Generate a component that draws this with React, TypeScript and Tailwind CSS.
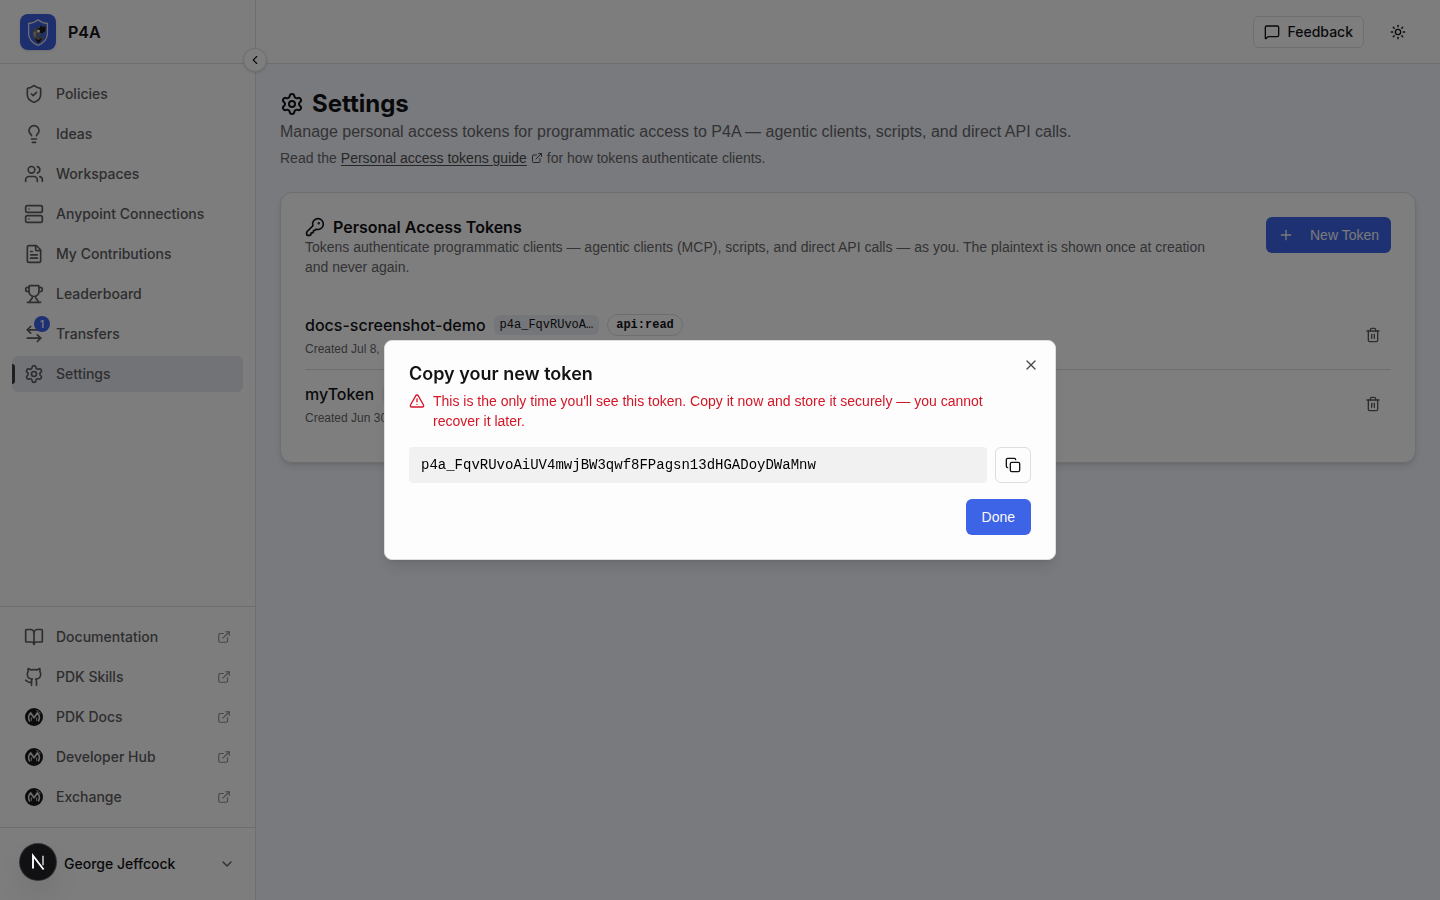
import React from "react";
import {
  ArrowLeftRight,
  BookOpen,
  ChevronDown,
  ChevronLeft,
  Copy,
  ExternalLink,
  FileText,
  Github,
  KeyRound,
  Lightbulb,
  MessageSquare,
  Plus,
  Server,
  Settings,
  ShieldCheck,
  Sun,
  Trash2,
  TriangleAlert,
  Trophy,
  Users,
  X,
} from "lucide-react";

type IconType = React.ComponentType<{ className?: string }>;

function MuleIcon({ className }: { className?: string }) {
  return (
    <svg viewBox="0 0 20 20" className={className} fill="none" aria-hidden="true">
      <circle cx="10" cy="10" r="9" fill="#18181b" />
      <path
        d="M5.800 14.600C3.900 11.600 4.400 8 6.700 6L10 10.800 13.300 6c2.300 2 2.800 5.600.9 8.600"
        stroke="#d8d8d8"
        strokeWidth="1.800"
        strokeLinejoin="round"
      />
      <path d="M7.300 13.800V10.500M12.700 13.800V10.500" stroke="#d8d8d8" strokeWidth="1" />
      <path d="M12.400 3.600c1.700.5 3.100 1.600 3.900 3.200" stroke="#d8d8d8" strokeWidth="0.900" />
    </svg>
  );
}

function Logo() {
  return (
    <svg viewBox="0 0 36 36" className="size-9 shrink-0 rounded-lg shadow-sm" aria-hidden="true">
      <rect width="36" height="36" fill="#3d5ee0" />
      <path
        d="M18 5.800c2.800 2.400 6 3.500 9.400 3.700v10.200c0 5.400-4 9.200-9.400 11.700-5.400-2.500-9.400-6.300-9.400-11.700V9.500c3.400-.2 6.600-1.300 9.400-3.700z"
        fill="#3d5ee0"
        stroke="#dcdcdc"
        strokeWidth="1.300"
      />
      <path
        d="M12.500 16l3.500-2.500 2 .5 2.500-3 1.500 1.500 3-1.500v4.500l-1 3.500-3.500 1-2 2.500 2.500 1 4-2-1.500 3.500-4.500 4-4-2.500-2-4.500z"
        fill="#6b6b6b"
      />
      <path d="M17 14.500l3-.5.500-3 2 2 3-1v5l-3.500 2.500-2.500-1zM14.500 24.500l4 1.500 4-2.500-2.500 4.500-2 1z" fill="#1c1c1c" />
      <path d="M13.500 18l3-1-1 6.500-2-1.500z" fill="#a0a0a0" />
      <circle cx="18.500" cy="17" r="1.500" fill="#f0f0f0" />
    </svg>
  );
}

const navItems: { label: string; icon: IconType; badge?: string; active?: boolean }[] = [
  { label: "Policies", icon: ShieldCheck },
  { label: "Ideas", icon: Lightbulb },
  { label: "Workspaces", icon: Users },
  { label: "Anypoint Connections", icon: Server },
  { label: "My Contributions", icon: FileText },
  { label: "Leaderboard", icon: Trophy },
  { label: "Transfers", icon: ArrowLeftRight, badge: "1" },
  { label: "Settings", icon: Settings, active: true },
];

const linkItems: { label: string; icon: IconType }[] = [
  { label: "Documentation", icon: BookOpen },
  { label: "PDK Skills", icon: Github },
  { label: "PDK Docs", icon: MuleIcon },
  { label: "Developer Hub", icon: MuleIcon },
  { label: "Exchange", icon: MuleIcon },
];

const tokens: { name: string; prefix?: string; scope?: string; created: string }[] = [
  { name: "docs-screenshot-demo", prefix: "p4a_FqvRUvoA…", scope: "api:read", created: "Created Jul 8," },
  { name: "myToken", created: "Created Jun 30" },
];

function Sidebar() {
  return (
    <aside className="relative flex w-64 shrink-0 flex-col border-r border-[#dcdde2] bg-[#fafafa]">
      <div className="flex h-16 shrink-0 items-center gap-3 border-b border-[#dcdde2] px-5">
        <Logo />
        <span className="text-base font-semibold">P4A</span>
      </div>
      <button
        type="button"
        aria-label="Collapse sidebar"
        className="absolute top-12 -right-3 z-10 flex size-6 items-center justify-center rounded-full border border-[#dcdde2] bg-[#fdfdfd] shadow-sm"
      >
        <ChevronLeft className="size-3.5" />
      </button>
      <nav className="flex flex-1 flex-col gap-1 p-3 text-sm font-medium text-[#5c5c60]">
        {navItems.map(({ label, icon: Icon, badge, active }) => (
          <a
            key={label}
            href="#"
            className={
              active
                ? "relative flex h-9 items-center gap-3 rounded-md bg-[#e4e7ef] px-3"
                : "relative flex h-9 items-center gap-3 rounded-md px-3"
            }
          >
            {active && <span className="absolute top-2 left-0 h-5 w-[3px] rounded-r-sm bg-[#3c3c40]" />}
            <span className="relative">
              <Icon className="size-5" />
              {badge && (
                <span className="absolute -top-2 -right-1.5 flex size-4 items-center justify-center rounded-full bg-[#3d63e6] text-[10px] text-white">
                  {badge}
                </span>
              )}
            </span>
            {label}
          </a>
        ))}
      </nav>
      <nav className="flex flex-col gap-1 border-t border-[#dcdde2] p-3 text-sm font-medium text-[#5c5c60]">
        {linkItems.map(({ label, icon: Icon }) => (
          <a key={label} href="#" className="flex h-9 items-center gap-3 rounded-md px-3">
            <Icon className="size-5" />
            <span className="flex-1">{label}</span>
            <ExternalLink className="size-3.5 text-[#8e8e92]" />
          </a>
        ))}
      </nav>
      <div className="border-t border-[#dcdde2] p-3">
        <button type="button" className="flex h-12 w-full items-center gap-3 rounded-md px-2 text-left text-sm font-medium">
          <span className="size-8 shrink-0 rounded-full bg-[#e4e7ef]" />
          <span className="flex-1">George Jeffcock</span>
          <ChevronDown className="size-4 text-[#5c5c60]" />
        </button>
      </div>
    </aside>
  );
}

function TokenCard() {
  return (
    <section className="mt-6 rounded-xl border border-[#dcdde2] bg-[#fdfdfd] p-6 shadow-md">
      <div className="flex items-start justify-between gap-10">
        <div>
          <h2 className="flex h-5 items-center gap-2 text-base font-semibold">
            <KeyRound className="size-5" />
            Personal Access Tokens
          </h2>
          <p className="font-['Liberation_Sans',sans-serif] text-sm text-[#66666a]">
            Tokens authenticate programmatic clients — agentic clients (MCP), scripts, and direct API calls — as you. The
            plaintext is shown once at creation and never again.
          </p>
        </div>
        <button
          type="button"
          className="flex h-9 shrink-0 items-center gap-4 rounded-md bg-[#3d63e6] px-3 font-['Liberation_Sans',sans-serif] text-sm text-[#f4f4f4]"
        >
          <Plus className="size-4" />
          New Token
        </button>
      </div>
      <ul className="mt-6 divide-y divide-[#dcdde2]">
        {tokens.map((token) => (
          <li key={token.name} className="flex items-center justify-between py-3">
            <div>
              <div className="flex h-6 items-center gap-2">
                <span className="font-medium">{token.name}</span>
                <code className="h-5 min-w-24 rounded-md bg-[#eaecf2] px-1.5 py-0.5 font-['Liberation_Mono',monospace] text-xs">
                  {token.prefix}
                </code>
                {token.scope && (
                  <span className="rounded-full border border-[#dcdde2] px-2 py-0.5 font-['Liberation_Mono',monospace] text-xs font-semibold">
                    {token.scope}
                  </span>
                )}
              </div>
              <p className="mt-1 font-['Liberation_Sans',sans-serif] text-xs text-[#66666a]">{token.created}</p>
            </div>
            <button
              type="button"
              aria-label={"Delete " + token.name}
              className="flex size-9 items-center justify-center text-[#5c5c60]"
            >
              <Trash2 className="size-4" />
            </button>
          </li>
        ))}
      </ul>
    </section>
  );
}

function TokenDialog() {
  return (
    <div className="fixed inset-0 z-20 flex items-center justify-center bg-black/50 p-4">
      <div
        role="dialog"
        aria-modal="true"
        aria-labelledby="dialog-title"
        className="relative w-full max-w-2xl rounded-lg border border-[#dedede] bg-[#fdfdfd] p-6 shadow-lg"
      >
        <button type="button" aria-label="Close" className="absolute top-4 right-4 text-[#4a4a4e]">
          <X className="size-4" />
        </button>
        <h2 id="dialog-title" className="text-lg leading-[18px] font-semibold">
          Copy your new token
        </h2>
        <p className="mt-2 flex items-start gap-2 font-['Liberation_Sans',sans-serif] text-sm text-[#d31526]">
          <TriangleAlert className="mt-0.5 size-4 shrink-0" />
          <span>
            This is the only time you'll see this token. Copy it now and store it securely — you cannot recover it later.
          </span>
        </p>
        <div className="mt-4 flex gap-2">
          <code className="flex h-9 flex-1 items-center rounded-sm bg-[#f1f1f1] px-3 font-['Liberation_Mono',monospace] text-sm text-black">
            p4a_FqvRUvoAiUV4mwjBW3qwf8FPagsn13dHGADoyDWaMnw
          </code>
          <button
            type="button"
            aria-label="Copy token"
            className="flex size-9 items-center justify-center rounded-md border border-[#dedede]"
          >
            <Copy className="size-4" />
          </button>
        </div>
        <div className="mt-4 flex justify-end">
          <button
            type="button"
            className="h-9 rounded-md bg-[#3d63e6] px-4 font-['Liberation_Sans',sans-serif] text-sm text-[#fafafa]"
          >
            Done
          </button>
        </div>
      </div>
    </div>
  );
}

export default function App() {
  return (
    <div className="flex min-h-screen bg-[#f2f4fa] font-['Inter',sans-serif] text-[#131316]">
      <Sidebar />
      <div className="flex min-w-0 flex-1 flex-col">
        <header className="flex h-16 items-center justify-end gap-4 border-b border-[#dcdde2] bg-[#fafafa] px-6">
          <button
            type="button"
            className="flex h-8 items-center gap-2 rounded-md border border-[#dcdde2] bg-[#fdfdfd] px-2.5 text-sm font-medium"
          >
            <MessageSquare className="size-4" />
            Feedback
          </button>
          <button type="button" aria-label="Toggle theme" className="flex size-9 items-center justify-center">
            <Sun className="size-4" />
          </button>
        </header>
        <main className="flex-1 p-6">
          <h1 className="flex items-center gap-2 text-2xl font-bold">
            <Settings className="size-6" />
            Settings
          </h1>
          <p className="font-['Liberation_Sans',sans-serif] text-base text-[#66666a]">
            Manage personal access tokens for programmatic access to P4A — agentic clients, scripts, and direct API calls.
          </p>
          <p className="mt-1 flex items-center gap-1 font-['Liberation_Sans',sans-serif] text-sm text-[#66666a]">
            <span>Read the</span>
            <a href="#" className="flex items-center gap-1 text-[#4c4c50]">
              <span className="underline underline-offset-2">Personal access tokens guide</span>
              <ExternalLink className="size-3" />
            </a>
            <span>for how tokens authenticate clients.</span>
          </p>
          <TokenCard />
        </main>
      </div>
      <TokenDialog />
      <button
        type="button"
        aria-label="Open developer tools"
        className="fixed bottom-5 left-5 z-30 flex size-9 items-center justify-center rounded-full bg-[#111113] shadow-[0_0_0_1px_#333336,0_16px_32px_-8px_rgba(0,0,0,0.24)]"
      >
        <svg viewBox="0 0 16 16" className="size-5" fill="none" aria-hidden="true">
          <path d="M4 13.200V3l8.500 11" stroke="#ffffff" strokeWidth="1.500" />
          <path d="M12 3v7.500" stroke="#b5b5b5" strokeWidth="1.400" />
        </svg>
      </button>
    </div>
  );
}
